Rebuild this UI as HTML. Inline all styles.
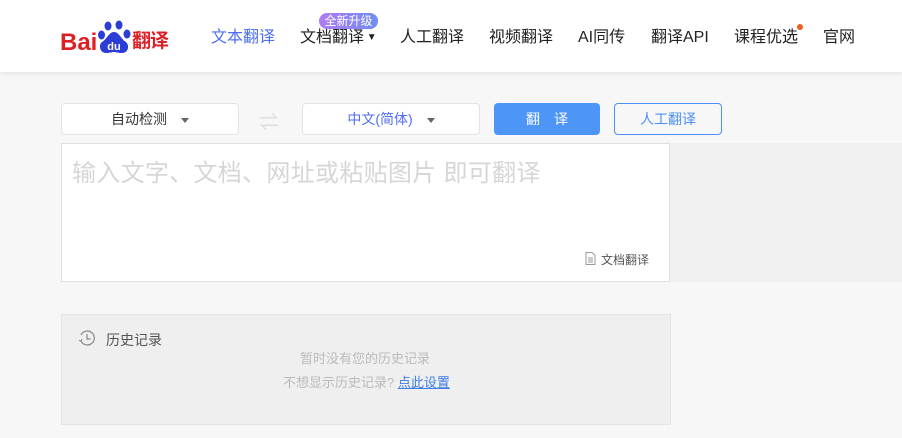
<!DOCTYPE html>
<html><head><meta charset="utf-8"><style>
*{margin:0;padding:0;box-sizing:border-box}
body{width:902px;height:438px;overflow:hidden;background:#f7f7f7;font-family:"Liberation Sans","Noto Sans CJK SC",sans-serif;position:relative}
.hd{position:absolute;left:0;top:0;width:902px;height:72px;background:#fff;box-shadow:0 2px 6px rgba(0,0,0,.08)}
.nav{position:absolute;top:28px;font-size:16px;color:#222;white-space:nowrap;line-height:20px}
.a{position:absolute}
.sel{position:absolute;top:103px;height:32px;background:#fff;border:1px solid #e3e3e3;border-radius:4px;font-size:14px;line-height:30px;text-align:center}
.tri{display:inline-block;width:0;height:0;border-left:4px solid transparent;border-right:4px solid transparent;border-top:5px solid #666;vertical-align:middle;margin-left:14px}
</style></head><body>
<div class="hd">
 <div class="a" style="left:60px;top:28px;font:bold 24px 'Liberation Sans',sans-serif;color:#de1f26;line-height:30px">Bai</div>
 <svg class="a" style="left:98px;top:20px" width="34" height="36" viewBox="0 0 34 36">
  <ellipse cx="10" cy="6" rx="3.5" ry="4.5" fill="#2c3dd6"/><ellipse cx="21" cy="5" rx="3.5" ry="4.5" fill="#2c3dd6"/>
  <ellipse cx="3.5" cy="15" rx="3.5" ry="4.5" fill="#2c3dd6"/><ellipse cx="29" cy="14" rx="3.5" ry="4.5" fill="#2c3dd6"/>
  <path d="M16 12c-5 0-7 7-12 10-4 3-2 11 4 11 4 0 6-1 8-1s4 1 8 1c6 0 8-7 4-11-5-3-7-10-12-10z" fill="#2c3dd6"/>
  <text x="16" y="30" font-size="11" font-weight="bold" fill="#fff" text-anchor="middle" font-family="Liberation Sans">du</text>
 </svg>
 <div class="a" style="left:132px;top:29px;font-size:19px;font-weight:bold;color:#de1f26;line-height:26px;letter-spacing:-1px">翻译</div>
 <div class="nav" style="left:211px;color:#4e6ef2">文本翻译</div>
 <div class="nav" style="left:300px">文档翻译<span style="font-size:10px;vertical-align:2px"> ▼</span></div>
 <div class="a" style="left:319px;top:13px;width:59px;height:16px;border-radius:8px;background:linear-gradient(90deg,#b07cf5,#6f8cf3);color:#fff;font-size:12px;line-height:16px;text-align:center">全新升级</div>
 <div class="nav" style="left:400px">人工翻译</div>
 <div class="nav" style="left:489px">视频翻译</div>
 <div class="nav" style="left:578px">AI同传</div>
 <div class="nav" style="left:651px">翻译API</div>
 <div class="nav" style="left:734px">课程优选</div>
 <div class="a" style="left:797px;top:24px;width:6px;height:6px;border-radius:50%;background:#f05a1e"></div>
 <div class="nav" style="left:823px">官网</div>
</div>
<div class="sel" style="left:61px;width:178px;color:#333">自动检测<span class="tri"></span></div>
<div class="a" style="left:259px;top:106px;font-size:20px;color:#ddd">⇌</div>
<div class="sel" style="left:302px;width:178px;color:#4e6ef2">中文(简体)<span class="tri"></span></div>
<div class="a" style="left:494px;top:103px;width:106px;height:32px;background:#4d96f7;border-radius:4px;color:#fff;font-size:14px;line-height:32px;text-align:center;letter-spacing:14px;padding-left:14px">翻译</div>
<div class="a" style="left:614px;top:103px;width:108px;height:32px;border:1px solid #4e8ff5;border-radius:4px;color:#4e8ff5;font-size:14px;line-height:30px;text-align:center">人工翻译</div>
<div class="a" style="left:61px;top:143px;width:609px;height:139px;background:#fff;border:1px solid #e0e0e0"></div>
<div class="a" style="left:670px;top:143px;width:232px;height:139px;background:#f0f0f0"></div>
<div class="a" style="left:72px;top:153px;font-size:24px;color:#d6d6d6;letter-spacing:0.3px;white-space:nowrap">输入文字、文档、网址或粘贴图片 即可翻译</div>
<svg class="a" style="left:585px;top:252px" width="11" height="13" viewBox="0 0 11 13"><path d="M1 .5h6l3 3v9H1z M3 6h5M3 8h5M3 10h5" fill="none" stroke="#999" stroke-width="1"/></svg>
<div class="a" style="left:601px;top:251px;font-size:12px;color:#555">文档翻译</div>
<div class="a" style="left:61px;top:314px;width:610px;height:111px;background:#efefef;border:1px solid #e4e4e4"></div>
<svg class="a" style="left:78px;top:329px" width="18" height="18" viewBox="0 0 18 18"><path d="M3 6A7 7 0 1 1 3 12" fill="none" stroke="#888" stroke-width="1.2"/><path d="M9 5v5h3.5" fill="none" stroke="#888" stroke-width="1.2"/><path d="M1 11l2 1.5 1-2.5" fill="none" stroke="#888" stroke-width="1"/></svg>
<div class="a" style="left:106px;top:330px;font-size:14px;color:#555">历史记录</div>
<div class="a" style="left:300px;top:348px;font-size:13px;color:#bbb">暂时没有您的历史记录</div>
<div class="a" style="left:283px;top:372px;font-size:13px;color:#bbb;white-space:nowrap">不想显示历史记录? <span style="color:#3d7ee8;text-decoration:underline">点此设置</span></div>
</body></html>
